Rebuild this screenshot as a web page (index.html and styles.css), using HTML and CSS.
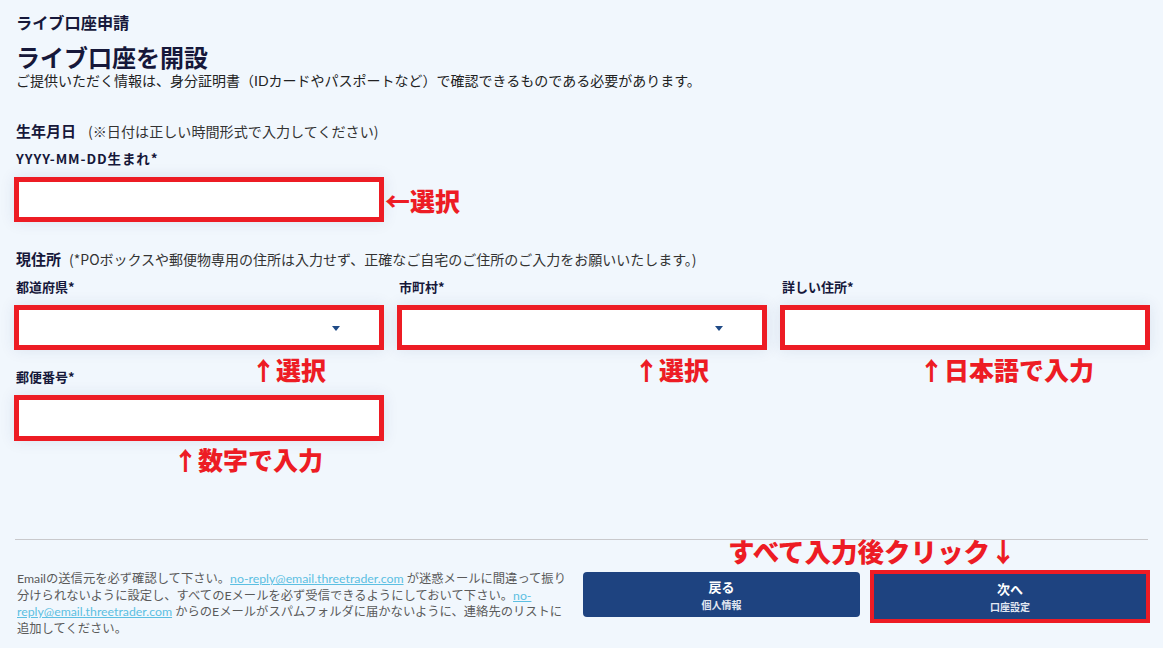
FILE: index.html
```html
<!DOCTYPE html>
<html lang="ja">
<head>
<meta charset="utf-8">
<title>ライブ口座申請</title>
<link rel="stylesheet" href="styles.css">
</head>
<body>
<div class="page">
  <div class="crumb">ライブ口座申請</div>
  <h1 class="title">ライブ口座を開設</h1>
  <p class="desc">ご提供いただく情報は、身分証明書（IDカードやパスポートなど）で確認できるものである必要があります。</p>

  <div class="sec-head">生年月日<span class="note">(※日付は正しい時間形式で入力してください)</span></div>
  <div class="label label-dob">YYYY-MM-DD生まれ*</div>
  <div class="dob-row">
    <div class="field"></div>
    <span class="anno anno-inline">←選択</span>
  </div>

  <div class="sec-head sec-addr">現住所<span class="note">(*POボックスや郵便物専用の住所は入力せず、正確なご自宅のご住所のご入力をお願いいたします。)</span></div>
  <div class="addr-grid">
    <div class="col">
      <div class="label">都道府県*</div>
      <div class="field select"><span class="caret"></span></div>
      <span class="anno anno-sel">↑選択</span>
    </div>
    <div class="col">
      <div class="label">市町村*</div>
      <div class="field select"><span class="caret"></span></div>
      <span class="anno anno-sel">↑選択</span>
    </div>
    <div class="col">
      <div class="label">詳しい住所*</div>
      <div class="field"></div>
      <span class="anno anno-jp">↑日本語で入力</span>
    </div>
    <div class="col col-zip">
      <div class="label">郵便番号*</div>
      <div class="field field-zip"></div>
      <span class="anno anno-zip">↑数字で入力</span>
    </div>
  </div>

  <hr class="rule">

  <div class="footer">
    <p class="notice">Emailの送信元を必ず確認して下さい。<a href="#">no-reply@email.threetrader.com</a> が迷惑メールに間違って振り<br>分けられないように設定し、すべてのEメールを必ず受信できるようにしておいて下さい。<a href="#">no-<br>reply@email.threetrader.com</a> からのEメールがスパムフォルダに届かないように、連絡先のリストに<br>追加してください。</p>
    <div class="buttons">
      <span class="anno anno-click">すべて入力後クリック↓</span>
      <button class="btn" type="button"><span class="btn-main">戻る</span><span class="btn-sub">個人情報</span></button>
      <div class="btn-frame">
        <button class="btn btn-next" type="button"><span class="btn-main">次へ</span><span class="btn-sub">口座設定</span></button>
      </div>
    </div>
  </div>
</div>
</body>
</html>
```

FILE: styles.css
```css
html, body {
  margin: 0;
  padding: 0;
  background: #f1f7fd;
}
body {
  font-family: "Noto Sans CJK JP", "Noto Sans", sans-serif;
  color: #16183a;
  width: 1163px;
  height: 648px;
  overflow: hidden;
}
.page {
  padding: 12px 13px 0 15px;
}
.crumb {
  font-size: 16.2px;
  font-weight: 700;
  line-height: 20px;
  margin-left: 1px;
}
.title {
  margin: 12px 0 0 1px;
  font-family: Lato, "Noto Sans CJK JP", sans-serif;
  font-size: 24px;
  font-weight: 700;
  line-height: 28px;
}
.desc {
  margin: 0 0 0 1px;
  font-family: Lato, "Noto Sans CJK JP", sans-serif;
  font-size: 14px;
  line-height: 18px;
  color: #222;
}
.sec-head {
  margin-top: 31px;
  margin-left: 1px;
  font-size: 15px;
  font-weight: 700;
  line-height: 20px;
}
.sec-head .note {
  font-size: 14.1px;
  font-weight: 400;
  color: #333;
  margin-left: 12px;
}
.sec-addr .note {
  margin-left: 8px;
  font-size: 14px;
}
.sec-addr {
  margin-top: 27px;
}
.label {
  font-size: 13px;
  font-weight: 700;
  line-height: 18px;
  margin-left: 1px;
}
.label-dob {
  margin-top: 8px;
  font-size: 13.5px;
  letter-spacing: 0.9px;
}
.dob-row {
  margin-top: 10px;
  display: flex;
  align-items: center;
}
.field {
  box-sizing: border-box;
  width: 370px;
  height: 45px;
  background: #fff;
  border: 5px solid #ed1c24;
  box-shadow: 0 0 14px rgba(30, 60, 120, 0.10);
  margin-left: -1px;
}
.anno {
  color: #ed1c24;
  font-weight: 900;
  font-size: 25px;
  line-height: 28px;
  white-space: nowrap;
}
.anno-inline {
  margin-left: 1px;
}
.addr-grid {
  margin-top: 9px;
  display: grid;
  grid-template-columns: repeat(3, 369px);
  column-gap: 14px;
  row-gap: 18px;
}
.col {
  position: relative;
}
.col .field {
  margin-top: 9px;
  width: 370px;
}
.select {
  display: flex;
  align-items: center;
  justify-content: flex-end;
  padding-right: 39px;
}
.caret {
  width: 0;
  height: 0;
  border-left: 4.5px solid transparent;
  border-right: 4.5px solid transparent;
  border-top: 5px solid #1f4a86;
  margin-top: 1px;
}
.anno-sel,
.anno-jp,
.anno-zip {
  position: absolute;
  top: 77px;
}
.anno-sel {
  left: 236px;
}
.anno-jp {
  left: 138px;
}
.anno-zip {
  left: 158px;
}
.col-zip .field-zip {
  height: 46px;
}
.rule {
  margin: 98px 2px 0 0;
  border: 0;
  border-top: 1px solid #c9c9cc;
}
.footer {
  display: flex;
  align-items: flex-start;
  padding-top: 31px;
}
.notice {
  margin: 0 0 0 2px;
  width: 562px;
  font-family: Lato, "Noto Sans CJK JP", sans-serif;
  font-size: 12.3px;
  line-height: 16.5px;
  color: #5a5a5a;
  white-space: nowrap;
}
.notice a {
  color: #5cbfe2;
  text-decoration: underline;
}
.buttons {
  position: relative;
  display: flex;
  align-items: flex-start;
  margin-left: 4px;
}
.anno-click {
  position: absolute;
  left: 145px;
  top: -35px;
  font-size: 26.5px;
  line-height: 30px;
}
.btn {
  box-sizing: border-box;
  width: 277px;
  height: 45px;
  margin-top: 1px;
  border: 0;
  border-radius: 4px;
  background: #1e4380;
  color: #fff;
  display: flex;
  flex-direction: column;
  align-items: center;
  justify-content: center;
  gap: 3px;
  font-family: inherit;
  padding: 0;
}
.btn-main {
  font-size: 13px;
  font-weight: 700;
  line-height: 16px;
}
.btn-sub {
  font-size: 10px;
  font-weight: 700;
  line-height: 13px;
  color: #e3e8f2;
}
.btn-frame {
  margin-left: 10px;
  margin-top: -1px;
  border: 4px solid #ed1c24;
  display: flex;
}
.btn-frame .btn-next {
  width: 272px;
  margin-top: 0;
  border-radius: 0;
}
```
